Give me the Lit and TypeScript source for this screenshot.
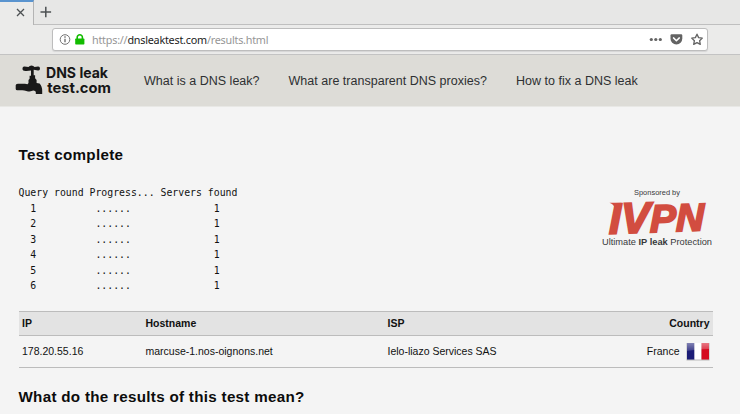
import { LitElement, html, css } from "lit";
import { customElement } from "lit/decorators.js";

@customElement("browser-chrome")
class BrowserChrome extends LitElement {
  static styles = css`
    :host { display: block; font-family: "Noto Sans", sans-serif; }
    .tabs { display: flex; height: 25px; box-sizing: border-box; background: #e7e7e6; }
    .tab { box-sizing: border-box; width: 34px; height: 25px; border-top: 2px solid #5a94cf; border-right: 1px solid #b4b4b4; background: #ebebea; }
    .rest { flex: 1; box-sizing: border-box; border-bottom: 1px solid #bfbfbf; }
    svg { display: block; }
    .bar { box-sizing: border-box; height: 30px; padding: 3px 0 0 52px; background: #ebebea; border-bottom: 1px solid #c3c3c3; }
    .field { box-sizing: border-box; display: flex; width: 656px; height: 23px; border: 1px solid #bdbdbd; border-radius: 3px; background: #fff; box-shadow: 0 1px 1px #d5d5d5; align-items: center; }
    .url { flex: 1; font-size: 10.8px; letter-spacing: -.23px; line-height: 21px; color: #969696; white-space: pre; margin-left: 3px; }
    .url b { font-weight: 400; color: #222; }
  `;
  render() {
    return html`
      <div class="tabs">
        <div class="tab">
          <svg width="33" height="23"><path d="M17 7l7 7M24 7l-7 7" stroke="#4d5153" stroke-width="1.3" fill="none" /></svg>
        </div>
        <div class="rest">
          <svg width="30" height="23"><path d="M6.500 12h10.600M11.800 6.700v10.600" stroke="#4d5153" stroke-width="1.5" fill="none" /></svg>
        </div>
      </div>
      <div class="bar">
        <div class="field">
          <svg width="36" height="21">
            <circle cx="12" cy="10.5" r="4.8" fill="none" stroke="#737373" stroke-width="1" />
            <path d="M12 9.700v3.600M12 7.300v1.400" stroke="#666" stroke-width="1.3" />
            <rect x="22.2" y="9.5" width="9.2" height="6" rx=".7" fill="#12bc00" />
            <path d="M24.200 10V8.300a2.600 2.600 0 0 1 5.200 0V10" fill="none" stroke="#12bc00" stroke-width="1.6" />
          </svg>
          <div class="url">https://<b>dnsleaktest.com</b>/results.html</div>
          <svg width="60" height="21">
            <g fill="#636363"><circle cx="4.300" cy="10.5" r="1.6" /><circle cx="8.800" cy="10.5" r="1.6" /><circle cx="13.300" cy="10.5" r="1.6" />
            <path d="M24.700 5.200h9.400q1.200 0 1.200 1.200v3.200a5.900 5.900 0 0 1-11.800 0V6.400q0-1.200 1.200-1.200z" /></g>
            <path d="M26.500 8.900l2.900 2.800 2.900-2.800" fill="none" stroke="#fff" stroke-width="1.5" stroke-linecap="round" stroke-linejoin="round" />
            <path d="M50 5.200l1.600 3.400 3.700.5-2.700 2.600.7 3.700-3.300-1.800-3.300 1.800.7-3.700-2.700-2.600 3.700-.5z" fill="none" stroke="#636363" stroke-width="1.300" stroke-linejoin="round" />
          </svg>
        </div>
      </div>`;
  }
}

@customElement("site-header")
class SiteHeader extends LitElement {
  static styles = css`
    :host { display: flex; height: 51px; background: #dddcd7; border-bottom: 1px solid #e8e8e5; font-family: "Liberation Sans", sans-serif; }
    svg { display: block; flex: none; }
    .word { font: 700 14.6px Inter, sans-serif; fill: #161616; }
    nav { display: flex; gap: 29px; padding-left: 19px; font-size: 12.5px; letter-spacing: .012px; line-height: 52px; color: #2e3032; white-space: nowrap; }
  `;
  render() {
    return html`
      <svg width="125" height="51">
        <g fill="#191919">
          <path d="M22.500 13.500q0-2.200 2-2l4 .6q1-1.600 3-1.600t3 1.600l3.500-.6q2-.2 2 2t-2 1.900l-4.300-.6v5.400h1.400v3l1.500 1.700v3.100l3 .5q2.600 2.600 2.600 7.600v3h-6.400v-2q-.2-1.500-2.500-1.500-3 1.500-7 .3-2-.6-4-.6h-4.500q-2.100.2-2.100-1.400v-3.600q0-1.500 2.100-1.500H25l2.500.5 1-1.300v-3.100l1.100-1.100v-3H31v-5.400l-4.500.6q-4 .4-4-1.900z" />
        </g>
        <g class="word">
          <text x="46" y="22.500" textLength="62" lengthAdjust="spacingAndGlyphs">DNS leak</text>
          <text x="47.3" y="37.5" textLength="63.700" lengthAdjust="spacingAndGlyphs">test.com</text>
        </g>
      </svg>
      <nav><span>What is a DNS leak?</span><span>What are transparent DNS proxies?</span><span>How to fix a DNS leak</span></nav>`;
  }
}

@customElement("app-root")
class AppRoot extends LitElement {
  static styles = css`
    :host { display: block; height: 414px; overflow: hidden; background: #f4f4f4; color: #111; font-family: "Liberation Sans", sans-serif; }
    main { padding: 37px 26.5px 0 18.5px; }
    h2 { margin: 0; font-size: 15.2px; letter-spacing: .29px; line-height: 22px; color: #0c0c0c; }
    .results { display: flex; justify-content: space-between; height: 127px; padding-top: 18px; }
    pre { margin: 0; padding-top: 1px; font: 9.84px/15.55px "DejaVu Sans Mono", monospace; }
    table { width: 694.5px; border-collapse: collapse; table-layout: fixed; font-size: 10.5px; }
    th, td { padding: 0 3.5px 2px; text-align: left; border-top: 1px solid #bcbcbc; border-bottom: 1px solid #bcbcbc; }
    th { height: 21px; background: #e3e3e3; }
    td { height: 29px; }
    .ip { width: 116.5px; }
    .host { width: 235px; }
    .isp { width: 200px; }
    th:last-child, td:last-child { text-align: right; }
    .country { display: flex; justify-content: flex-end; align-items: center; gap: 6px; }
    .country svg { display: block; margin: 2px 0 0; }
    .next { margin-top: 18px; }
  `;
  render() {
    const rounds = [1, 2, 3, 4, 5, 6].map((n) => `  ${n}          ......              1`);
    return html`
      <browser-chrome></browser-chrome>
      <site-header></site-header>
      <main>
        <h2>Test complete</h2>
        <div class="results">
          <pre>${["Query round Progress... Servers found", ...rounds].join("\n")}</pre>
          <svg width="117" height="70" font-family="Liberation Sans, sans-serif" fill="#38393b">
            <text x="37" y="11" font-size="7" textLength="46" lengthAdjust="spacingAndGlyphs">Sponsored by</text>
            <g fill="#d24d40">
              <text transform="matrix(1 -.038 0 1 12 49.8)" font-size="43" font-weight="700" font-style="italic" stroke="#d24d40" stroke-width="2" textLength="95" lengthAdjust="spacingAndGlyphs">IV<tspan font-size="38.5">PN</tspan></text>
              <path d="M12.500 18.700h12l-1.500 6h-5q-1-4.400-5.500-6z" />
            </g>
            <text x="5" y="61.300" font-size="8.8" textLength="110" lengthAdjust="spacingAndGlyphs">Ultimate <tspan font-weight="700">IP leak</tspan> Protection</text>
          </svg>
        </div>
        <table>
          <thead><tr><th class="ip">IP</th><th class="host">Hostname</th><th class="isp">ISP</th><th>Country</th></tr></thead>
          <tbody><tr>
            <td>178.20.55.16</td><td>marcuse-1.nos-oignons.net</td><td>Ielo-liazo Services SAS</td>
            <td><div class="country">France
              <svg width="24" height="19">
                <defs><linearGradient id="shine" x2="0" y2="1"><stop stop-color="#fff" stop-opacity=".45" /><stop offset="1" stop-color="#fff" stop-opacity=".15" /></linearGradient></defs>
                <rect x=".5" y="1" width="23" height="17.500" fill="#b9b9b9" />
                <path d="M1 1h7.500v16.500H1z" fill="#1b1c76" /><path d="M8.500 1h7v16.500h-7z" fill="#fff" /><path d="M15.500 1H23v16.500h-7.500z" fill="#d5091f" />
                <path d="M1 1h22v6q-11 0-22 2z" fill="url(#shine)" />
              </svg></div></td>
          </tr></tbody>
        </table>
        <h2 class="next">What do the results of this test mean?</h2>
      </main>`;
  }
}
